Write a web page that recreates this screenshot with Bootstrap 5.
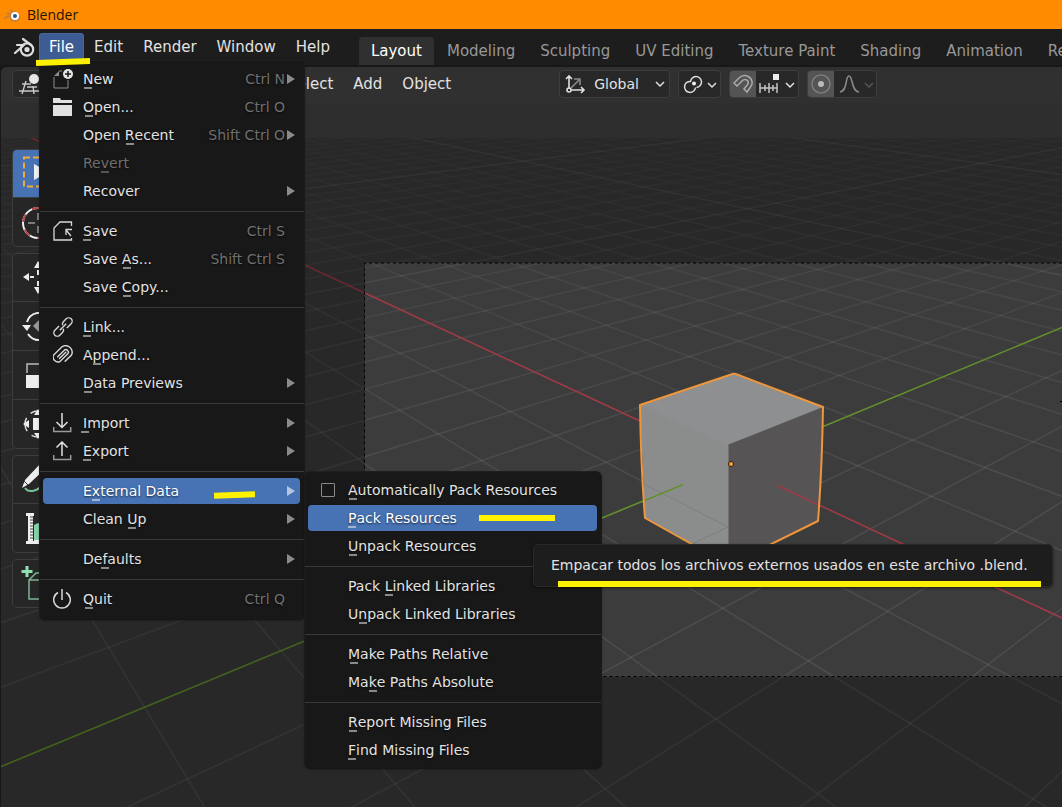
<!DOCTYPE html>
<html lang="en">
<head>
<meta charset="utf-8">
<meta name="viewport" content="width=device-width, initial-scale=1">
<title>Blender</title>
<link href="https://cdn.jsdelivr.net/npm/bootstrap@5.3.0/dist/css/bootstrap.min.css" rel="stylesheet">
<style>
:root{--ink:#e2e2e2;--dim:#6f6f6f;--panel:#181818;--blue:#4772b3;--mark:#fff200}
body{font-family:"DejaVu Sans",sans-serif;font-size:14px;line-height:20px;color:var(--ink);background:#181818;overflow:hidden}
button,select,input{font:inherit;color:inherit}
svg{display:block;flex:none}
.titlebar{background:#ff8c00;height:29px;padding-left:3px;gap:6px;color:#1d1205;font-family:"Open Sans",sans-serif;font-size:14px}
.topbar{background:#1d1d1d;height:38px;border-bottom:2px solid #181818;padding-left:13px;white-space:nowrap;z-index:5}
.menubtn{border:0;background:none;height:28px;padding:0 10px;border-radius:4px 4px 0 0;margin-top:4px;font-size:15px}
.menubtn.open{background:#3d5c94;box-shadow:inset 0 0 0 1px #47679f;color:#fff}
.tabs{gap:1px;margin-left:19px;margin-top:8px;flex:1 1 0;min-width:0;overflow:hidden}
.tabs button{border:0;background:none;color:#989898;height:28px;padding:0 12px;border-radius:4px 4px 0 0;font-size:15px;flex:none}
.tabs button.on{background:#303030;color:#fff}
.viewport{min-height:0;border-top-left-radius:6px;margin-left:1px}
.scene{inset:0;width:100%;height:100%}
.header{height:36px;padding:3px 0 0 11px;background:#303030;white-space:nowrap}
.header .menus{margin-left:217px}
.header .menus button{border:0;background:none;padding:0 10px;height:28px;font-size:15px}
.transform-tools{margin-left:98px}
.ctl{height:28px;border:1px solid #3d3d3d;border-radius:4px;background:#282828;overflow:hidden}
.ctl .seg{border:0;background:none;height:100%;padding:0}
.ctl .lit{background:#545454;width:26px}
.ctl select{border:0;appearance:none;outline:0;padding:0;width:75px;background:transparent url("data:image/svg+xml,%3Csvg xmlns='http://www.w3.org/2000/svg' width='10' height='8' fill='none' stroke='%23e0e0e0' stroke-width='1.500'%3E%3Cpath d='M1 2l4 4 4-4'/%3E%3C/svg%3E") no-repeat right 4px center}
.tools{padding:46px 0 0 11px;gap:6px}
.tools .grp{border:1px solid #3d3d3d;border-radius:5px;background:#262626;width:49px;overflow:hidden}
.tools button{border:0;background:none;height:47px;padding:0}
.tools button+button{border-top:1px solid #3d3d3d;height:49px}
.tools button.on{background:var(--blue)}
.popmenu{background:var(--panel);border-radius:0 0 5px 5px;padding:4px 0 6px;box-shadow:0 1px 3px #0008, 0 0 0 1px #222;list-style:none;margin:0;z-index:10}
.filemenu{left:1px;top:32px;width:264px}
.submenu{left:265px;top:-5px;width:296px;padding-bottom:4px;border-radius:5px}
.popmenu>li{padding:1px 4px 1px 3px}
.entry{border:0;background:none;height:26px;width:100%;border-radius:4px;padding:0 5px 0 10px;text-align:left;text-shadow:0 1px 2px #000a}
.entry .ico{width:20px;height:20px;margin-right:10px;flex:none}
.entry.hot{background:var(--blue);color:#fff}
.entry .keys{color:var(--dim);margin-left:auto;margin-right:2px}
.entry .arr{width:8px;height:10px;background:#8a8a8a;clip-path:polygon(0 0,100% 50%,0 100%);flex:none}
.entry .arr.alone{margin-left:auto}
.entry.hot .arr{background:#b5c5e0}
.entry .pad{width:8px}
.entry.off{color:#6f6f6f}
.popmenu>li.rule{height:12px;padding:6px 0 0}
.rule hr{margin:0;border-top:1px solid #3a3a3a;opacity:1}
.k{position:relative;text-decoration:none}
.k::after{content:"";position:absolute;left:50%;margin-left:-4px;bottom:-2px;width:8px;height:2px;background:#8a8a8a}
.hot .k::after{background:#a5b4cf}
.off .k::after{background:#555}
.tick{appearance:none;width:14px;height:14px;border:1px solid #8c8c8c;border-radius:1px;margin:0 13px 0 3px}
.tip{left:228px;top:40px;background:#1d1d1d;border:1px solid #282828;border-radius:5px;height:43px;padding:10px 24px 0 17px;white-space:nowrap;z-index:20;box-shadow:0 1px 3px #0008}
.marker{background:var(--mark);height:6px;pointer-events:none}
.m-file{left:-3px;top:30px;width:54px;transform:rotate(-2deg);z-index:12}
.m-ext{left:174px;top:15px;width:41px;transform:rotate(-2deg)}
.m-pack{left:174px;top:11px;width:76px}
.m-tip{left:24px;top:36px;right:11px}
</style>
</head>
<body class="vh-100 d-flex flex-column">
<header class="titlebar d-flex align-items-center">
  <svg width="18" height="16" viewBox="0 0 18 16"><path d="M0 11L6 7H3V5.500h6L6 3l2-1 7 5c5 4 1 8-3 8s-6-2-5-5L2 12z" fill="#cf7f2e"/><circle cx="12" cy="9" r="4" fill="#fff"/><circle cx="12" cy="9" r="2" fill="#265787"/></svg>
  <span>Blender</span>
</header>
<nav class="topbar d-flex align-items-start position-relative flex-shrink-0">
  <svg width="22" height="22" viewBox="0 0 22 22" class="mt-2 me-1" fill="none" stroke="#ddd" stroke-width="2.200" stroke-linecap="round" stroke-linejoin="round"><path d="M2 16l9-8H4M10 2l8 6"/><circle cx="14" cy="12.500" r="6.200"/><circle cx="14" cy="12.500" r="1.500" fill="#ddd"/></svg>
  <div class="position-relative">
    <button class="menubtn open" aria-expanded="true">File</button>
    <ul class="popmenu filemenu position-absolute">
      <li><button class="entry d-flex align-items-center"><svg class="ico" viewBox="0 0 20 20"><path d="M1 8v11h14v-8" fill="none" stroke="#8c8c8c"/><path d="M1 7l5-5v5z" fill="#8c8c8c"/><path d="M6 2h3" stroke="#8c8c8c"/><circle cx="15" cy="5" r="5" fill="#e6e6e6"/><path d="M15 2v6M12 5h6" stroke="#181818" stroke-width="1.500"/></svg><span><u class="k">N</u>ew</span><span class="keys">Ctrl N</span><i class="arr"></i></button></li>
      <li><button class="entry d-flex align-items-center"><svg class="ico" viewBox="0 0 20 20" fill="#e0e0e0"><path d="M0 1h7l1 2h11v3H0zM0 8h19v11H0z"/></svg><span><u class="k">O</u>pen...</span><span class="keys">Ctrl O</span><i class="pad"></i></button></li>
      <li><button class="entry d-flex align-items-center"><i class="ico"></i><span>Open <u class="k">R</u>ecent</span><span class="keys">Shift Ctrl O</span><i class="arr"></i></button></li>
      <li><button class="entry off d-flex align-items-center"><i class="ico"></i><span>Re<u class="k">v</u>ert</span></button></li>
      <li><button class="entry d-flex align-items-center"><i class="ico"></i><span>Recover</span><i class="arr alone"></i></button></li>
      <li class="rule"><hr></li>
      <li><button class="entry d-flex align-items-center"><svg class="ico" viewBox="0 0 20 20" fill="none" stroke="#d8d8d8" stroke-width="1.300"><path d="M18.500 5V1H7L1 7v12h17.500v-2M18 15l-5-6M13 14V8.500h6"/></svg><span><u class="k">S</u>ave</span><span class="keys">Ctrl S</span><i class="pad"></i></button></li>
      <li><button class="entry d-flex align-items-center"><i class="ico"></i><span>Save <u class="k">A</u>s...</span><span class="keys">Shift Ctrl S</span><i class="pad"></i></button></li>
      <li><button class="entry d-flex align-items-center"><i class="ico"></i><span>Save <u class="k">C</u>opy...</span></button></li>
      <li class="rule"><hr></li>
      <li><button class="entry d-flex align-items-center"><svg class="ico" viewBox="0 0 20 20" fill="none" stroke="#d8d8d8" stroke-width="1.400"><g transform="rotate(-45 10 10)"><path d="M8 6.500H2a3.500 3.500 0 0 0 0 7h4a3.500 3.500 0 0 0 3-2M12 13.500h6a3.500 3.500 0 0 0 0-7h-4a3.500 3.500 0 0 0-3 2M5.500 10h9"/></g></svg><span><u class="k">L</u>ink...</span></button></li>
      <li><button class="entry d-flex align-items-center"><svg class="ico" viewBox="0 0 20 20" fill="none" stroke="#d8d8d8" stroke-width="1.400" stroke-linecap="round"><g transform="rotate(-45 10 10)"><path d="M5 7.500h9a2.500 2.500 0 0 1 0 5H3a5 5 0 0 1 0-9h12a6.500 6.500 0 0 1 1 12.500H7M14 10H5"/></g></svg><span>A<u class="k">p</u>pend...</span></button></li>
      <li><button class="entry d-flex align-items-center"><i class="ico"></i><span><u class="k">D</u>ata Previews</span><i class="arr alone"></i></button></li>
      <li class="rule"><hr></li>
      <li><button class="entry d-flex align-items-center"><svg class="ico" viewBox="0 0 20 20" fill="none" stroke="#e0e0e0" stroke-width="1.500"><path d="M9 0v14M3.500 9L9 14.500 14.500 9"/><path d="M.7 14v4.500h17V14" stroke="#999"/></svg><span><u class="k">I</u>mport</span><i class="arr alone"></i></button></li>
      <li><button class="entry d-flex align-items-center"><svg class="ico" viewBox="0 0 20 20" fill="none" stroke="#e0e0e0" stroke-width="1.500"><path d="M9 15V1M3.500 6.500L9 1l5.500 5.500"/><path d="M.7 14v4.500h17V14" stroke="#999"/></svg><span><u class="k">E</u>xport</span><i class="arr alone"></i></button></li>
      <li class="rule"><hr></li>
      <li class="position-relative">
        <button class="entry hot d-flex align-items-center" aria-expanded="true"><i class="ico"></i><span>E<u class="k">x</u>ternal Data</span><i class="arr alone"></i></button>
        <div class="marker m-ext position-absolute"></div>
        <ul class="popmenu submenu position-absolute">
          <li><div class="entry d-flex align-items-center"><input class="tick" type="checkbox" id="autopack"><label for="autopack"><u class="k">A</u>utomatically Pack Resources</label></div></li>
          <li class="position-relative">
            <button class="entry hot d-flex align-items-center" aria-describedby="tip"><i class="ico"></i><span><u class="k">P</u>ack Resources</span></button>
            <div class="marker m-pack position-absolute"></div>
            <div class="tip position-absolute" id="tip" role="tooltip">Empacar todos los archivos externos usados en este archivo .blend.<div class="marker m-tip position-absolute"></div></div>
          </li>
          <li><button class="entry d-flex align-items-center"><i class="ico"></i><span><u class="k">U</u>npack Resources</span></button></li>
          <li class="rule"><hr></li>
          <li><button class="entry d-flex align-items-center"><i class="ico"></i><span>Pack <u class="k">L</u>inked Libraries</span></button></li>
          <li><button class="entry d-flex align-items-center"><i class="ico"></i><span>U<u class="k">n</u>pack Linked Libraries</span></button></li>
          <li class="rule"><hr></li>
          <li><button class="entry d-flex align-items-center"><i class="ico"></i><span><u class="k">M</u>ake Paths Relative</span></button></li>
          <li><button class="entry d-flex align-items-center"><i class="ico"></i><span>Ma<u class="k">k</u>e Paths Absolute</span></button></li>
          <li class="rule"><hr></li>
          <li><button class="entry d-flex align-items-center"><i class="ico"></i><span><u class="k">R</u>eport Missing Files</span></button></li>
          <li><button class="entry d-flex align-items-center"><i class="ico"></i><span><u class="k">F</u>ind Missing Files</span></button></li>
        </ul>
      </li>
      <li><button class="entry d-flex align-items-center"><i class="ico"></i><span>Clean <u class="k">U</u>p</span><i class="arr alone"></i></button></li>
      <li class="rule"><hr></li>
      <li><button class="entry d-flex align-items-center"><i class="ico"></i><span>De<u class="k">f</u>aults</span><i class="arr alone"></i></button></li>
      <li class="rule"><hr></li>
      <li><button class="entry d-flex align-items-center"><svg class="ico" viewBox="0 0 20 20" fill="none" stroke="#d8d8d8" stroke-width="1.500"><path d="M9 0v11M5 3.500a8.300 8.300 0 1 0 8 0"/></svg><span><u class="k">Q</u>uit</span><span class="keys">Ctrl Q</span><i class="pad"></i></button></li>
    </ul>
    <div class="marker m-file position-absolute"></div>
  </div>
  <button class="menubtn">Edit</button>
  <button class="menubtn">Render</button>
  <button class="menubtn">Window</button>
  <button class="menubtn">Help</button>
  <div class="tabs d-flex">
    <button class="on">Layout</button><button>Modeling</button><button>Sculpting</button><button>UV Editing</button><button>Texture Paint</button><button>Shading</button><button>Animation</button><button>Rendering</button>
  </div>
</nav>
<main class="viewport flex-grow-1 position-relative overflow-hidden">
  <svg class="scene position-absolute" viewBox="1 67 1061 740" preserveAspectRatio="xMinYMin slice" aria-label="3D scene">
    <defs>
      <clipPath id="floor"><rect x="0" y="138" width="1062" height="669"/></clipPath>
      <linearGradient id="fade" gradientUnits="userSpaceOnUse" x1="0" y1="138" x2="0" y2="480"><stop offset="0" stop-color="#fff" stop-opacity=".02"/><stop offset=".4" stop-color="#fff" stop-opacity=".05"/><stop offset="1" stop-color="#fff" stop-opacity=".08"/></linearGradient>
    </defs>
    <rect y="67" width="1062" height="740" fill="#3c3c3c"/>
    <g clip-path="url(#floor)" fill="none"><g id="grid"></g>
      <path d="M-325-28L640 421M777 485.500L1062 618" stroke="#a03a48" stroke-width="1.600"/>
      <path d="M0 767L683 484.500M822 427L1062 327.500" stroke="#64902c" stroke-width="1.600"/>
    </g>
    <path d="M0 67H1062V263H365V677H1062V807H0z" fill="#000" fill-opacity=".32"/>
    <rect y="67" width="1062" height="71" fill="#2e2e2e"/>
    <path d="M1062 263H364.500V676.500H1062" fill="none" stroke="#000" stroke-dasharray="3 3"/>
    <path d="M1060 401.500h2" stroke="#000"/>
    <path d="M640 405L733 374 823 407 818 521 729 565 645 518z" fill="#8b8d8d"/>
    <path d="M640 405L733 374 823 407 728 445z" fill="#8d8f91"/>
    <path d="M728.500 444.500L823 407 818 521 728.500 565z" fill="#565455"/>
    <path d="M644 484L728 527M692 544l36-17" stroke="#7d807f"/>
    <path d="M645 500.500L683 484.500" stroke="#64902c" stroke-width="1.600"/>
    <path d="M777 485.500l41 19" stroke="#a03a48" stroke-width="1.600"/>
    <path d="M640 405L731 374.500Q734 373 737 374.500L823 407Q822 470 818 521L729 565 645 518Q641 470 640 405z" fill="none" stroke="#f0963a" stroke-width="2" stroke-linejoin="round"/>
    <circle cx="731" cy="464" r="2.500" fill="#ffa035" stroke="#30200c"/>
  </svg>
  <div class="header d-flex align-items-start position-relative">
    <button class="ctl p-0" aria-label="Editor type"><svg width="46" height="26" viewBox="0 0 46 26" fill="none" stroke="#c8c8c8" stroke-width="1.400"><path d="M9 13h9M6 20h20M13 10L9 23M20 15l1 8M14 16h10"/><circle cx="21" cy="8" r="5" fill="#e6e6e6" stroke="none"/></svg></button>
    <div class="menus d-flex"><button>Select</button><button>Add</button><button>Object</button></div>
    <div class="d-flex gap-2 transform-tools">
      <div class="ctl d-flex align-items-center"><svg width="26" height="26" viewBox="0 0 26 26" class="me-2" fill="none" stroke="#e0e0e0" stroke-width="1.600"><path d="M9 18V5M6 8l3-3 3 3M11 19h13M21 16l3 3-3 3"/><circle cx="9" cy="19" r="2"/><path d="M11 17l9-9M14 8h6v6" stroke="#888"/></svg><select aria-label="Orientation"><option>Global</option></select></div>
      <button class="ctl p-0" aria-label="Pivot"><svg width="41" height="26" viewBox="0 0 41 26" fill="none" stroke="#dcdcdc" stroke-width="1.500"><path d="M11.500 11a5.500 5.500 0 1 1 6 5.500M12 10.500a5.500 5.500 0 1 0 4.500 6"/><circle cx="15" cy="12.500" r="2" fill="#eee" stroke="none"/><path d="M29 12l4 4 4-4"/></svg></button>
      <div class="ctl d-flex"><button class="seg lit" aria-label="Snap"><svg width="26" height="26" viewBox="0 0 26 26" fill="none" stroke="#aaa" stroke-width="1.500"><path d="M4 12l5-5c6-6 14 0 13 6-1 3-3 5-5 8l-3-3 4-5c1-4-3-6-6-3l-5 5z"/></svg></button><button class="seg" aria-label="Snap to"><svg width="42" height="26" viewBox="0 0 42 26" fill="none" stroke="#c4c4c4" stroke-width="1.500"><path d="M4 12v10M21 12v10M4 17h17M9 14v6M13 12v10M17 14v6"/><path d="M17 3h6v6h-6z" fill="#eee" stroke="none"/><path d="M30 12l4 4 4-4" stroke="#e4e4e4"/></svg></button></div>
      <div class="ctl d-flex"><button class="seg lit" aria-label="Proportional editing"><svg width="26" height="26" viewBox="0 0 26 26" fill="none"><circle cx="13" cy="13" r="9" stroke="#7c7c7c" stroke-width="1.500"/><circle cx="13" cy="13" r="3" fill="#bbb"/></svg></button><button class="seg" aria-label="Falloff"><svg width="42" height="26" viewBox="0 0 42 26" fill="none" stroke="#8c8c8c" stroke-width="1.500"><path d="M6 21c8-1 5-16 9-16s2 15 10 16"/><path d="M31 12l4 4 4-4" stroke="#555"/></svg></button></div>
    </div>
  </div>
  <div class="tools d-flex flex-column position-relative">
    <div class="grp d-flex flex-column">
      <button class="on" aria-label="Select box"><svg width="47" height="47" viewBox="0 0 47 47"><path d="M11 7.500h26v29H11z" fill="none" stroke="#f3a93a" stroke-width="2" stroke-dasharray="6 3"/><path d="M21 14l14 8-14 8z" fill="#eee"/></svg></button>
      <button aria-label="Cursor"><svg width="47" height="47" viewBox="0 0 47 47" fill="none"><circle cx="25" cy="24" r="15" stroke="#eee" stroke-width="2"/><circle cx="25" cy="24" r="15" stroke="#b04848" stroke-width="2" stroke-dasharray="8 8"/><path d="M15 24h7M25 14v7M25 27v7" stroke="#999" stroke-width="1.500"/></svg></button>
    </div>
    <div class="grp d-flex flex-column">
      <button aria-label="Move"><svg width="47" height="47" viewBox="0 0 47 47" fill="#eee"><path d="M10 23l6-4v8zM17 22h4v2h-4zM25 7l5 7h-9zM24 16h3v5h-3zM24 27h3v5h-3zM25 40l5-7h-9z"/></svg></button>
      <button aria-label="Rotate"><svg width="47" height="47" viewBox="0 0 47 47"><path d="M14 19a13 13 0 0 1 22-5M15 31a13 13 0 0 0 22 0" fill="none" stroke="#eee" stroke-width="2"/><path d="M9 22h9l-4 6z" fill="#eee"/><path d="M20 23l6-6v12z" fill="#999"/></svg></button>
      <button aria-label="Scale"><svg width="47" height="47" viewBox="0 0 47 47"><path d="M14 21v-9h22v20" fill="none" stroke="#bbb" stroke-width="1.500"/><path d="M13 23h13v13H13z" fill="#eee"/></svg></button>
      <button aria-label="Transform"><svg width="47" height="47" viewBox="0 0 47 47"><circle cx="25" cy="23" r="13" fill="none" stroke="#ddd" stroke-width="1.500" stroke-dasharray="14 6" stroke-dashoffset="7"/><path d="M20 17h11v12H20zM10 23l6-4v8zM25 8l4 6h-8zM25 38l4-6h-8z" fill="#eee"/></svg></button>
    </div>
    <div class="grp d-flex flex-column">
      <button aria-label="Annotate"><svg width="47" height="47" viewBox="0 0 47 47"><path d="M9 32l3-8L28 7l5 5-17 16z" fill="#eee"/><path d="M12 32c4 6 16 2 16-4" fill="none" stroke="#78bf98" stroke-width="2"/><path d="M11 25l4 4" stroke="#333"/></svg></button>
      <button aria-label="Measure"><svg width="47" height="47" viewBox="0 0 47 47"><path d="M21 20q8-5 14 3v12H21z" fill="#85d0a6"/><path d="M13 8h8v3h-1v25h1v3h-8v-3h2V11h-2z" fill="#eee"/><path d="M17 12h3M17 15h3M17 18h3M17 21h3M17 24h3M17 27h3M17 30h3M17 33h3" stroke="#444"/><path d="M21 35h14v4H21z" fill="#eee"/></svg></button>
    </div>
    <div class="grp d-flex flex-column">
      <button aria-label="Add cube"><svg width="47" height="47" viewBox="0 0 47 47" fill="none" stroke="#7cb496" stroke-width="1.500"><path d="M14 6v11M8.500 11.500h11" stroke="#8fe0b0" stroke-width="3"/><path d="M16 20l7-7h14M16 20h18v19H16z"/></svg></button>
    </div>
  </div>
</main>
<script src="https://cdn.jsdelivr.net/npm/bootstrap@5.3.0/dist/js/bootstrap.bundle.min.js"></script>
<script>
// Floor grid: two families of parallels, each converging on its vanishing point.
const O=[731.5,464], RX=[-285.7,-10], GX=[1876,-10], b=.0602, d=.0565;
const at=(t,s)=>{const w=1-b*t+d*s;return [0,1].map(i=>(O[i]-b*t*RX[i]+d*s*GX[i])/w)};
function ray(v,p,major){
  const l=document.createElementNS('http://www.w3.org/2000/svg','line');
  l.setAttribute('x1',v[0]);l.setAttribute('y1',v[1]);
  l.setAttribute('x2',v[0]+(p[0]-v[0])*6);l.setAttribute('y2',v[1]+(p[1]-v[1])*6);
  l.setAttribute('stroke',major?'rgba(255,255,255,.07)':'url(#fade)');l.setAttribute('stroke-width',1.5);
  document.getElementById('grid').append(l);
}
for(let t=-42;t<=10;t++) if(t) ray(GX,at(t,0),t%10===0);
for(let s=-10;s<=34;s++) if(s) ray(RX,at(0,s),s%10===0);
</script>
</body>
</html>
